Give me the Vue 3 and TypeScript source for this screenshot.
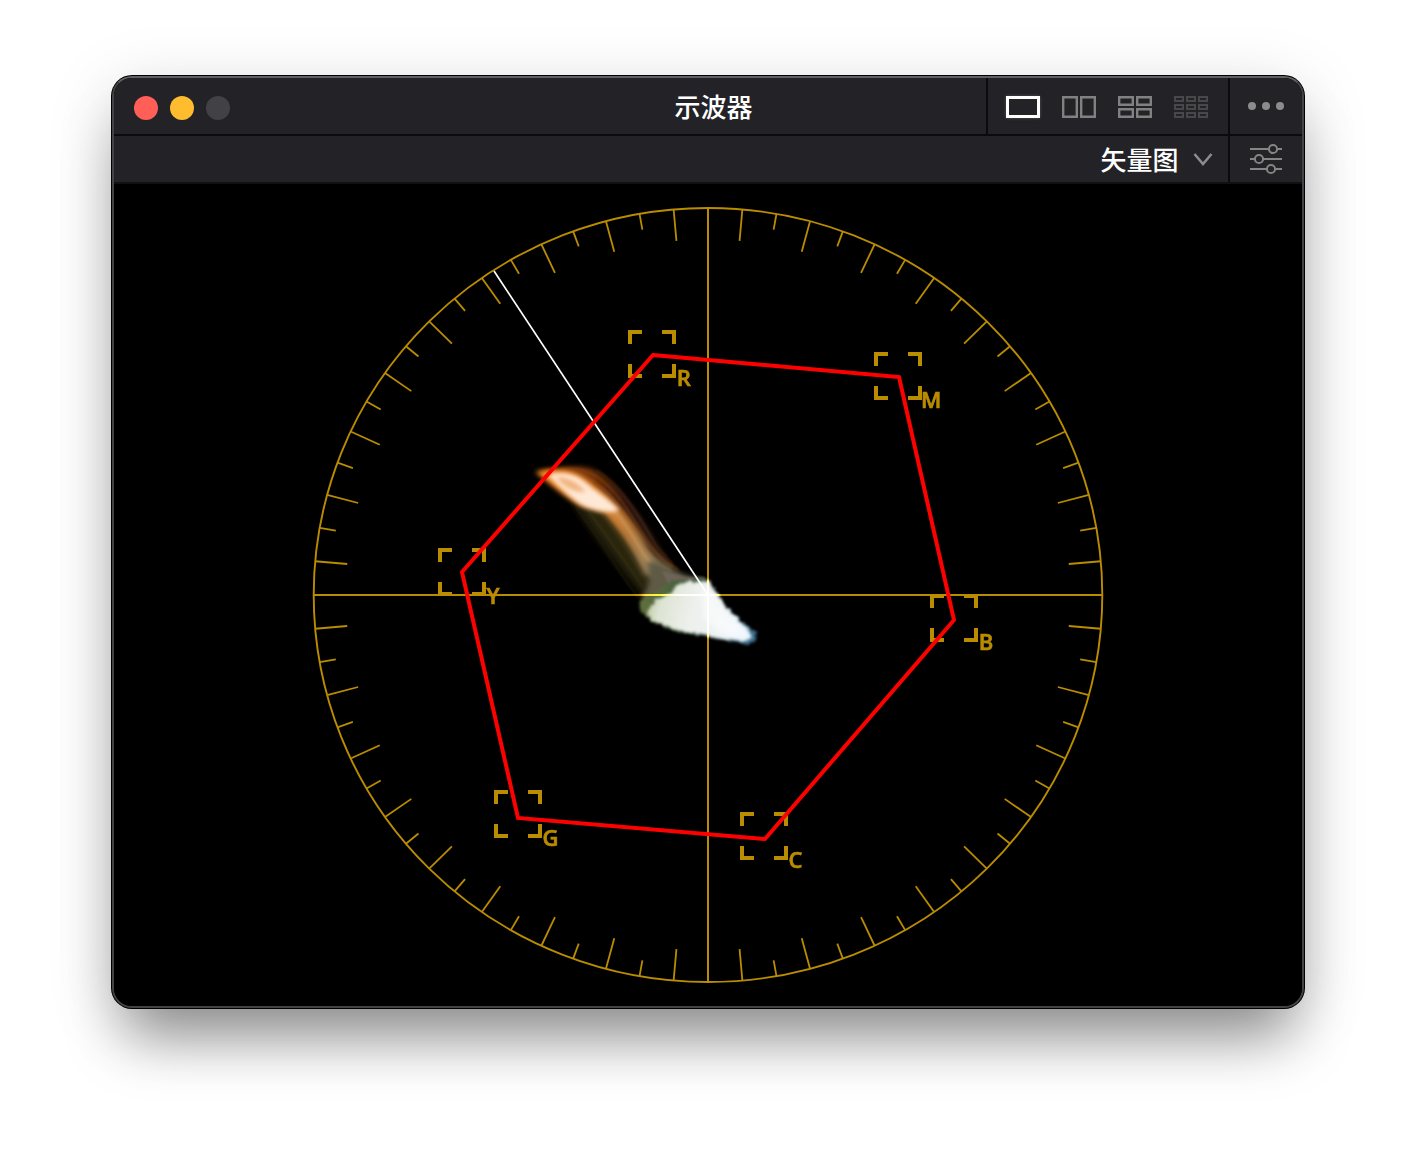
<script setup lang="ts">
interface Target { name: string; x: number; y: number; tx: number }
interface Tick { x1: number; y1: number; x2: number; y2: number }

const cx = 594
const cy = 411
const rx = 394.3
const ry = 387

const ticks: Tick[] = []
for (let deg = 5; deg < 360; deg += 5) {
  if (deg % 90 === 0) continue
  const inner = deg % 10 === 0 ? 0.9585 : 0.9185
  const c = Math.cos((deg * Math.PI) / 180)
  const s = Math.sin((deg * Math.PI) / 180)
  ticks.push({
    x1: cx + rx * c, y1: cy + ry * s,
    x2: cx + rx * c * inner, y2: cy + ry * s * inner,
  })
}

const targets: Target[] = [
  { name: 'R', x: 514, y: 146, tx: 48.8 },
  { name: 'M', x: 760, y: 168, tx: 46.9 },
  { name: 'B', x: 816, y: 410, tx: 48.8 },
  { name: 'C', x: 626, y: 628, tx: 48.6 },
  { name: 'G', x: 380, y: 606, tx: 48.6 },
  { name: 'Y', x: 324, y: 364, tx: 48.6 },
]
const corners = 'M2 14V2H14M34 2H46V14M46 34V46H34M14 46H2V34'
const hexagon = '539,171 785,193 840,436 651,655 404,634 348,388'

const nine = [0, 12, 24].flatMap((x) => [0, 8, 16].map((y) => ({ x, y })))
</script>

<template>
  <main class="desktop">
    <section class="window">
      <header class="titlebar">
        <div class="lights"><i class="red" /><i class="amber" /><i class="off" /></div>
        <h1>示波器</h1>
        <nav class="layouts">
          <svg class="on" width="34" height="22"><rect x="1.5" y="1.5" width="31" height="19" stroke-width="3" /></svg>
          <svg width="34" height="22"><path d="M1.2 1.2H14.8V20.8H1.2ZM19.2 1.2H32.8V20.8H19.2Z" /></svg>
          <svg width="34" height="22"><path d="M1.2 1.2H14.8V8.8H1.2ZM19.2 1.2H32.8V8.8H19.2ZM1.2 13.2H14.8V20.8H1.2ZM19.2 13.2H32.8V20.8H19.2Z" /></svg>
          <svg class="dim" width="34" height="22"><rect v-for="(n, i) in nine" :key="i" :x="n.x + 1" :y="n.y + 1" width="8" height="4" stroke-width="2" /></svg>
        </nav>
        <div class="more">
          <svg width="36" height="8"><circle cx="4" cy="4" r="4" /><circle cx="18" cy="4" r="4" /><circle cx="32" cy="4" r="4" /></svg>
        </div>
      </header>
      <div class="toolbar">
        <div class="mode">
          <span>矢量图</span>
          <svg width="20" height="14" viewBox="0 0 20 14"><path d="M1.5 2L10 12L18.5 2" /></svg>
        </div>
        <div class="settings">
          <svg width="34" height="32" viewBox="0 0 34 32">
            <path d="M1 6H19.5M28.5 6H33M1 16H5.5M14.5 16H33M1 26H17.5M26.5 26H33" />
            <circle cx="24" cy="6" r="4.1" /><circle cx="10" cy="16" r="4.1" /><circle cx="22" cy="26" r="4.1" />
          </svg>
        </div>
      </div>
      <svg class="scope" width="1188" height="822" viewBox="0 0 1188 822">
        <defs>
          <filter id="b1" x="-20%" y="-20%" width="140%" height="140%"><feGaussianBlur stdDeviation="1.3" /></filter>
          <filter id="b15" x="-30%" y="-30%" width="160%" height="160%"><feGaussianBlur stdDeviation="1.9" /></filter>
          <filter id="b2" x="-30%" y="-30%" width="160%" height="160%"><feGaussianBlur stdDeviation="2.6" /></filter>
          <filter id="b3" x="-30%" y="-30%" width="160%" height="160%"><feGaussianBlur stdDeviation="5" /></filter>
          <filter id="rough" x="-10%" y="-10%" width="120%" height="120%">
            <feTurbulence type="fractalNoise" baseFrequency="0.22" numOctaves="2" seed="4" result="n" />
            <feDisplacementMap in="SourceGraphic" in2="n" scale="5" xChannelSelector="R" yChannelSelector="G" />
            <feGaussianBlur stdDeviation="1.5" />
          </filter>
          <linearGradient id="veil" gradientUnits="userSpaceOnUse" x1="440" y1="280" x2="560" y2="390">
            <stop offset="0" stop-color="#b4560c" /><stop offset="0.28" stop-color="#602a06" />
            <stop offset="0.5" stop-color="#2e1509" /><stop offset="1" stop-color="#1c1310" />
          </linearGradient>
          <linearGradient id="band" gradientUnits="userSpaceOnUse" x1="440" y1="290" x2="545" y2="400">
            <stop offset="0" stop-color="#f58420" /><stop offset="0.4" stop-color="#dc8433" />
            <stop offset="0.62" stop-color="#b87838" />
            <stop offset="0.82" stop-color="#a08054" /><stop offset="1" stop-color="#6a6450" />
          </linearGradient>
          <linearGradient id="core" gradientUnits="userSpaceOnUse" x1="522" y1="420" x2="642" y2="455">
            <stop offset="0" stop-color="#aebc86" /><stop offset="0.2" stop-color="#dde4d4" />
            <stop offset="0.45" stop-color="#edf0ec" /><stop offset="0.8" stop-color="#eef4f8" /><stop offset="1" stop-color="#ddefff" />
          </linearGradient>
          <linearGradient id="rim" gradientUnits="userSpaceOnUse" x1="522" y1="420" x2="642" y2="455">
            <stop offset="0" stop-color="#62733a" /><stop offset="0.4" stop-color="#3f5640" />
            <stop offset="0.75" stop-color="#5f7880" /><stop offset="1" stop-color="#3c7092" />
          </linearGradient>
        </defs>

        <g class="grid">
          <path :d="`M${cx} 24V798M200 ${cy}H988`" stroke-width="2" />
          <ellipse :cx="cx" :cy="cy" :rx="rx" :ry="ry" stroke-width="1.9" />
          <line v-for="(t, i) in ticks" :key="i" :x1="t.x1" :y1="t.y1" :x2="t.x2" :y2="t.y2" />
        </g>
        <g v-for="t in targets" :key="t.name" :transform="`translate(${t.x} ${t.y})`">
          <path class="corners" :d="corners" />
          <text :x="t.tx" y="56">{{ t.name }}</text>
        </g>

        <g class="trace">
          <path filter="url(#b2)" fill="url(#veil)" d="M426 288C440 284 462 281 478 285C498 294 518 318 534 343C545 361 553 376 567 388L558 396L530 380C515 350 490 322 462 310Z" />
          <path filter="url(#b3)" fill="#2c2510" d="M458 316L494 322C512 334 526 356 538 380L546 404L530 412C508 386 480 350 458 316Z" />
          <g filter="url(#b1)" fill="none" stroke-width="1.6">
            <path stroke="#8a4716" stroke-opacity="0.6" d="M446 285C474 280 497 300 515 328S542 371 564 386" />
            <path stroke="#a1541b" stroke-opacity="0.6" d="M450 287C476 288 495 307 510 328S538 369 558 384" />
            <path stroke="#5c3421" stroke-opacity="0.6" d="M482 286C508 301 528 337 541 360L560 382" />
            <path stroke="#645533" stroke-opacity="0.2" d="M470 322C494 351 514 384 530 405M482 324C506 351 522 385 538 405M462 324C486 356 508 393 524 414" />
          </g>
          <path filter="url(#b2)" fill="url(#band)" d="M421 288C438 283 462 286 478 299C499 314 518 336 530 357C536 370 545 376 557 385L548 400L530 390C522 372 508 349 490 329L466 322C446 310 434 298 421 288Z" />
          <path filter="url(#b1)" fill="none" stroke="#c99a62" stroke-width="3" stroke-opacity="0.55" d="M497 325C512 338 522 358 530 371S550 382 558 389" />
          <path filter="url(#b15)" fill="#ffe9d6" d="M434 291C447 287 460 289 470 297C480 306 494 314 505 326C498 330 484 327 472 323C462 319 446 304 434 291Z" />
          <path filter="url(#b15)" fill="#f0aa72" fill-opacity="0.85" d="M442 293C452 292 464 298 472 308C460 309 448 302 442 293Z" />
          <path filter="url(#b2)" fill="#5e5a45" d="M534 378C543 375 554 384 572 391L588 396V412L532 422L527 412C536 404 537 392 534 378Z" />
          <path filter="url(#b1)" fill="#75695f" fill-opacity="0.7" d="M548 387L572 393L588 393L594 396L580 402L554 400Z" />
          <path filter="url(#rough)" fill="url(#rim)" d="M525 417L545 406L556 397L584 395L590 393L597 402L610 420L624 434L634 443L643 449L642 457L634 460L608 456L590 452L558 447L534 434L526 426Z" />
          <path filter="url(#rough)" fill="url(#core)" d="M532 427L542 416L557 410L562 401L576 397L586 399L595 396L603 411L619 431L633 444L638 453L631 458L608 455L588 450L558 445L538 436Z" />
          <path filter="url(#b2)" fill="#fff" fill-opacity="0.5" d="M586 406L598 408L616 432L635 450L629 455L606 449L590 434Z" />
          <path stroke="#fff" stroke-width="2" d="M562 411H600M594 402V446" />
        </g>

        <path class="skin" d="M380 87L594 411" />
        <polygon class="hexagon" :points="hexagon" />
      </svg>
    </section>
  </main>
</template>

<style>
body { background: #fff; }
</style>
<style scoped>
.desktop {
  box-sizing: border-box;
  width: 1416px;
  height: 1156px;
  padding: 76px 112px;
  overflow: hidden;
  background: #fff;
  font-family: "Noto Sans CJK SC", "Noto Sans", sans-serif;
}
.window {
  box-sizing: border-box;
  width: 1192px;
  height: 932px;
  border: 2px solid #434345;
  border-top-color: #606063;
  border-radius: 20px;
  overflow: hidden;
  background: #000;
  box-shadow: 0 0 0 1px #000, 0 42px 60px -14px rgba(0, 0, 0, 0.4), 0 12px 66px rgba(0, 0, 0, 0.15);
}
.titlebar, .toolbar {
  box-sizing: border-box;
  display: flex;
  background: #222227;
  border-bottom: 2px solid #0b0b0d;
}
.titlebar { height: 58px; position: relative; justify-content: flex-end; }
.toolbar { height: 48px; justify-content: flex-end; border-bottom-color: #111112; }
.lights { display: flex; align-items: center; gap: 12px; margin-right: auto; padding: 4px 0 0 20px; }
.lights i { width: 24px; height: 24px; border-radius: 50%; }
.red { background: #ff5f57; }
.amber { background: #febc2e; }
.off { background: #424146; }
h1 {
  position: absolute;
  left: 0;
  right: 0;
  top: 8px;
  margin: 0;
  padding-left: 11px;
  text-align: center;
  font-size: 26px;
  line-height: 40px;
  font-weight: 500;
  color: #fff;
}
.layouts {
  display: flex;
  align-items: center;
  gap: 22px;
  padding: 2px 20px 0 18px;
  border-left: 2px solid #0b0b0d;
}
.layouts svg { fill: none; stroke: #818181; stroke-width: 2.4; }
.layouts .on { stroke: #fff; box-shadow: 0 0 3px #555; }
.layouts .dim { stroke: #48484b; }
.more, .settings {
  box-sizing: border-box;
  width: 74px;
  display: flex;
  align-items: center;
  justify-content: center;
  border-left: 2px solid #0b0b0d;
}
.more svg { fill: #8c8c8c; }
.mode {
  display: flex;
  align-items: center;
  gap: 14.5px;
  padding-right: 15px;
  font-size: 26px;
  font-weight: 500;
  line-height: 46px;
  color: #fff;
}
.mode svg { fill: none; stroke: #8c8c8c; stroke-width: 2.6; }
.settings svg { fill: none; stroke: #858585; stroke-width: 2; }
.scope { display: block; background: #000; isolation: isolate; }
.grid { fill: none; stroke: #ba8c00; stroke-width: 1.8; }
.corners { fill: none; stroke: #ba8c00; stroke-width: 4; }
.scope text { font: 600 22px "Open Sans", sans-serif; fill: #ba8c00; stroke: #ba8c00; stroke-width: 0.7; }
.trace { mix-blend-mode: plus-lighter; }
.skin { stroke: #fff; stroke-width: 1.7; }
.hexagon { fill: none; stroke: #f00; stroke-width: 4; }
</style>
